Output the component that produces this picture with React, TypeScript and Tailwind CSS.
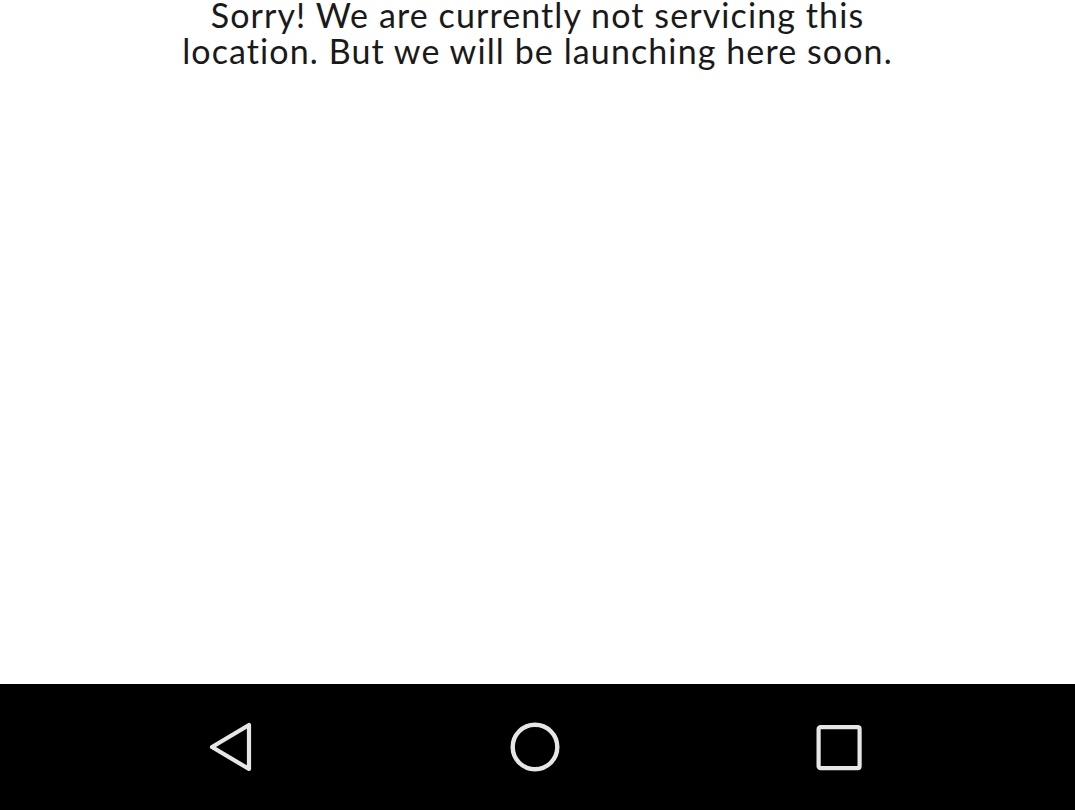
import React from "react";

export default function App() {
  return (
    <div className="w-[1075px] h-[810px] flex flex-col bg-white overflow-hidden">
      <div className="flex-1 flex flex-col items-center">
        <p
          className="mt-[-3px] text-center text-[34px] leading-[36px] tracking-[1.1px] text-[#1a1a1a]"
          style={{ fontFamily: "Lato, 'Open Sans', sans-serif" }}
        >
          Sorry! We are currently not servicing this
          <br />
          location. But we will be launching here soon.
        </p>
      </div>
      <div className="h-[126px] bg-black flex items-center justify-center gap-[253px] pr-[6px]">
        <svg width="48" height="54" viewBox="0 0 48 54">
          <path
            d="M42 5 L42 49 L5 27 Z"
            fill="none"
            stroke="#e6e6e6"
            strokeWidth="4.2"
            strokeLinejoin="round"
          />
        </svg>
        <svg width="54" height="54" viewBox="0 0 54 54">
          <circle cx="27" cy="27" r="22.3" fill="none" stroke="#e6e6e6" strokeWidth="4.4" />
        </svg>
        <svg width="48" height="54" viewBox="0 0 48 54">
          <rect x="3.6" y="7.2" width="41" height="41" rx="2" fill="none" stroke="#e6e6e6" strokeWidth="4.2" />
        </svg>
      </div>
    </div>
  );
}
